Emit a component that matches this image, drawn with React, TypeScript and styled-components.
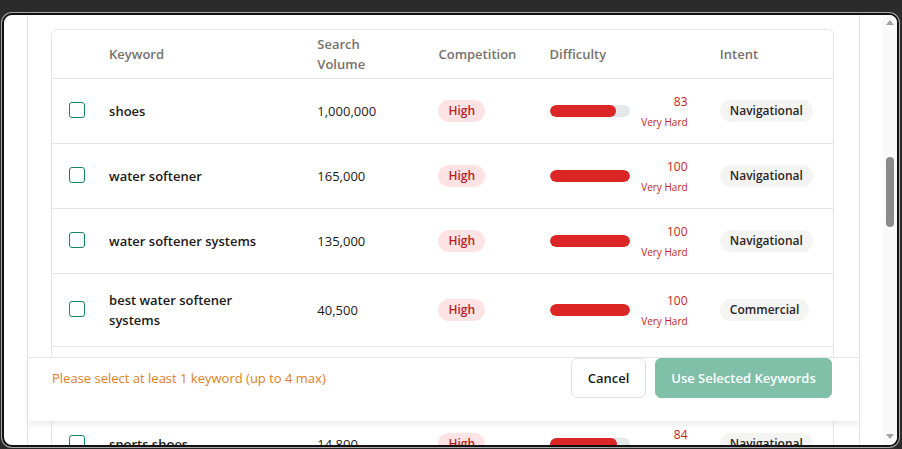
import React from 'react'
import styled, { createGlobalStyle } from 'styled-components'

const GlobalStyle = createGlobalStyle`
  html, body {
    margin: 0;
    padding: 0;
    background: #2b2b2b;
    overflow: hidden;
  }
  body {
    font-family: 'Open Sans', 'Noto Sans', sans-serif;
    -webkit-font-smoothing: antialiased;
  }
`

const Window = styled.div`
  margin: 13px 3px 2px 2px;
  height: 434px;
  box-sizing: border-box;
  border: 2px solid #111;
  border-radius: 10px;
  box-shadow: 0 0 0 1px #a8a8a8;
  background: #fff;
  display: flex;
  overflow: hidden;
`

const Viewport = styled.div`
  flex: 1;
  padding: 0 23px;
  overflow: hidden;
`

const Track = styled.div`
  width: 14px;
  background: #f9f9f9;
  position: relative;
`

const Arrow = styled.div<{ $down?: boolean }>`
  position: absolute;
  left: 3px;
  width: 0;
  height: 0;
  border-left: 4px solid transparent;
  border-right: 4px solid transparent;
  ${p => (p.$down
    ? 'bottom: 6px; border-top: 5px solid #a3a3a3;'
    : 'top: 5px; border-bottom: 5px solid #a3a3a3;')}
`

const Thumb = styled.div`
  position: absolute;
  left: 3px;
  top: 142px;
  width: 8px;
  height: 70px;
  border-radius: 4px;
  background: #8a8a8a;
`

const Modal = styled.div`
  position: relative;
  height: 100%;
  border-left: 1px solid #e5e5e5;
  border-right: 1px solid #e5e5e5;
  padding: 14px 25px 0 23px;
  box-sizing: border-box;
`

const Card = styled.div`
  border: 1px solid #e7e5e4;
  border-radius: 6px;
  overflow: hidden;
`

const Table = styled.table`
  width: 100%;
  border-collapse: collapse;
  table-layout: fixed;
`

const Th = styled.th`
  height: 48px;
  padding: 0 12px;
  text-align: left;
  font-size: 13px;
  font-weight: 600;
  line-height: 20px;
  color: #78716c;
`

const Tr = styled.tr`
  border-top: 1px solid #e7e5e4;
`

const Td = styled.td<{ $bold?: boolean; $padRight?: number }>`
  padding: 16px ${p => p.$padRight ?? 12}px 16px 12px;
  vertical-align: middle;
  font-size: 13px;
  line-height: 20px;
  color: #1c1917;
  font-weight: ${p => (p.$bold ? 600 : 400)};
`

const CheckCell = styled.td`
  padding: 0 0 0 17px;
  vertical-align: middle;
`

const Check = styled.input.attrs({ type: 'checkbox' })`
  appearance: none;
  display: block;
  margin: -3px 0 0;
  width: 16px;
  height: 16px;
  box-sizing: border-box;
  border: 1.5px solid #14865f;
  border-radius: 3px;
  background: #fff;
`

const Pill = styled.span<{ $tone: 'red' | 'gray' }>`
  display: inline-block;
  height: 22px;
  line-height: 22px;
  padding: 0 10px;
  border-radius: 11px;
  font-size: 12px;
  font-weight: 600;
  background: ${p => (p.$tone === 'red' ? '#fde3e3' : '#f4f4f3')};
  color: ${p => (p.$tone === 'red' ? '#b91c1c' : '#292524')};
`

const Difficulty = styled.div`
  display: flex;
  align-items: center;
`

const Bar = styled.div`
  width: 80px;
  height: 12px;
  border-radius: 6px;
  background: #e5e7eb;
  overflow: hidden;
`

const Fill = styled.div`
  height: 100%;
  border-radius: 6px;
  background: #dc2626;
`

const Score = styled.div`
  width: 58px;
  text-align: right;
  margin: -2px 0;
  color: #c81e1e;
`

const ScoreNum = styled.div`
  font-size: 12px;
  line-height: 18px;
`

const ScoreLabel = styled.div`
  font-size: 10px;
  line-height: 14px;
  margin-top: 4px;
`

const Footer = styled.div`
  position: absolute;
  left: 0;
  right: 0;
  top: 342px;
  height: 64px;
  box-sizing: border-box;
  border-top: 1px solid #e7e5e4;
  padding: 0 27px 23px 24px;
  background: #fff;
  box-shadow: 0 4px 6px rgba(0, 0, 0, 0.07);
  display: flex;
  align-items: flex-start;
  justify-content: space-between;
`

const Hint = styled.span`
  line-height: 40px;
  font-size: 13px;
  color: #dd7f1c;
`

const Actions = styled.div`
  display: flex;
  gap: 9px;
`

const Button = styled.button<{ $primary?: boolean }>`
  height: 40px;
  width: ${p => (p.$primary ? 177 : 75)}px;
  padding: 0;
  border-radius: 6px;
  font-family: inherit;
  font-size: 13px;
  font-weight: 600;
  border: 1px solid ${p => (p.$primary ? '#80c0a9' : '#e2e2e2')};
  background: ${p => (p.$primary ? '#80c0a9' : '#fff')};
  color: ${p => (p.$primary ? '#fff' : '#1c1917')};
`

type Row = {
  keyword: string
  volume: string
  score: number
  intent: string
}

const rows: Row[] = [
  { keyword: 'shoes', volume: '1,000,000', score: 83, intent: 'Navigational' },
  { keyword: 'water softener', volume: '165,000', score: 100, intent: 'Navigational' },
  { keyword: 'water softener systems', volume: '135,000', score: 100, intent: 'Navigational' },
  { keyword: 'best water softener systems', volume: '40,500', score: 100, intent: 'Commercial' },
  { keyword: 'water softener salt', volume: '33,100', score: 79, intent: 'Transactional' },
  { keyword: 'sports shoes', volume: '14,800', score: 84, intent: 'Navigational' },
]

const widths = [45, 208, 121, 111, 170, 125]

export default function App() {
  return (
    <>
      <GlobalStyle />
      <Window>
        <Viewport>
          <Modal>
            <Card>
              <Table>
                <colgroup>
                  {widths.map((w, i) => <col key={i} style={{ width: w }} />)}
                </colgroup>
                <thead>
                  <tr>
                    <Th />
                    <Th>Keyword</Th>
                    <Th>Search<br />Volume</Th>
                    <Th>Competition</Th>
                    <Th>Difficulty</Th>
                    <Th>Intent</Th>
                  </tr>
                </thead>
                <tbody>
                  {rows.map(r => (
                    <Tr key={r.keyword}>
                      <CheckCell><Check /></CheckCell>
                      <Td $bold $padRight={36}>{r.keyword}</Td>
                      <Td>{r.volume}</Td>
                      <Td><Pill $tone="red">High</Pill></Td>
                      <Td>
                        <Difficulty>
                          <Bar><Fill style={{ width: `${r.score}%` }} /></Bar>
                          <Score>
                            <ScoreNum>{r.score}</ScoreNum>
                            <ScoreLabel>Very Hard</ScoreLabel>
                          </Score>
                        </Difficulty>
                      </Td>
                      <Td><Pill $tone="gray">{r.intent}</Pill></Td>
                    </Tr>
                  ))}
                </tbody>
              </Table>
            </Card>
            <Footer>
              <Hint>Please select at least 1 keyword (up to 4 max)</Hint>
              <Actions>
                <Button>Cancel</Button>
                <Button $primary>Use Selected Keywords</Button>
              </Actions>
            </Footer>
          </Modal>
        </Viewport>
        <Track>
          <Arrow />
          <Thumb />
          <Arrow $down />
        </Track>
      </Window>
    </>
  )
}
